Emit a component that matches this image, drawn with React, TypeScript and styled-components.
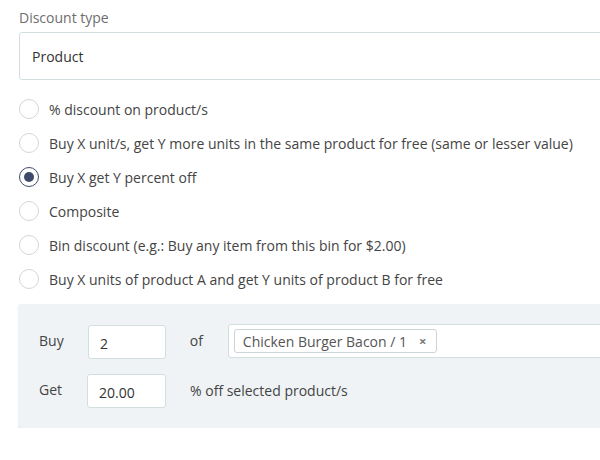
import React from "react";
import styled, { createGlobalStyle } from "styled-components";

const Global = createGlobalStyle`
  html, body { margin: 0; padding: 0; background: #fff; overflow: hidden; }
  body { font-family: "Open Sans", "Noto Sans", Arial, sans-serif; color: #444; }
  * { box-sizing: border-box; }
`;

const Page = styled.div`
  width: 660px;
  padding: 8px 0 0 19px;
`;

const Label = styled.div`
  font-size: 14px;
  color: #6e6e6e;
  line-height: 19px;
  margin-bottom: 5px;
`;

const Select = styled.div`
  height: 48px;
  border: 1px solid #d2dfe0;
  border-radius: 3px;
  padding: 0 12px;
  display: flex;
  align-items: center;
  font-size: 14px;
  color: #333;
`;

const RadioList = styled.div`
  display: flex;
  flex-direction: column;
  margin-top: 19px;
  gap: 14px;
`;

const RadioRow = styled.label`
  display: flex;
  align-items: center;
  gap: 10px;
  height: 20px;
  font-size: 14px;
  color: #444;
`;

const Circle = styled.span<{ $checked?: boolean }>`
  width: 20px;
  height: 20px;
  border-radius: 50%;
  border: 1px solid ${(p) => (p.$checked ? "#3f4d6b" : "#d6d6d6")};
  background: #fff;
  display: flex;
  align-items: center;
  justify-content: center;
  flex: none;
  &::after {
    content: "";
    display: ${(p) => (p.$checked ? "block" : "none")};
    width: 10px;
    height: 10px;
    border-radius: 50%;
    background: #3d4a6b;
  }
`;

const Panel = styled.div`
  margin-top: 15px;
  margin-left: -1px;
  background: #eff3f6;
  border-radius: 3px;
  box-shadow: 0 1px 1px rgba(0, 0, 0, 0.15);
  padding: 21px 21px 20px 21px;
  display: flex;
  flex-direction: column;
  gap: 15px;
`;

const FieldRow = styled.div`
  display: flex;
  align-items: center;
  font-size: 14px;
  color: #444;
`;

const RowLabel = styled.span`
  width: 49px;
  flex: none;
  margin-top: -3px;
`;

const SmallInput = styled.div<{ $shift?: number }>`
  width: 79px;
  height: 34px;
  background: #fff;
  border: 1px solid #d2dfe0;
  border-radius: 3px;
  display: flex;
  align-items: center;
  padding: 2px 11px 0;
  color: #333;
  margin-right: 24px;
  margin-left: ${(p) => p.$shift ?? 0}px;
`;

const Of = styled.span`
  width: 38px;
  flex: none;
  margin-top: -4px;
`;

const Aside = styled.span`
  margin-top: -2px;
`;

const TagInput = styled.div`
  width: 420px;
  height: 34px;
  background: #fff;
  border: 1px solid #d2dfe0;
  border-radius: 3px;
  display: flex;
  align-items: center;
  padding: 0 5px;
  margin-top: -2px;
`;

const Chip = styled.span`
  height: 24px;
  border: 1px solid #ccd4d8;
  border-radius: 3px;
  display: flex;
  align-items: center;
  padding: 0 10px 0 8px;
  gap: 12px;
  color: #555;
  font-size: 14px;
`;

const X = styled.span`
  font-size: 13px;
  color: #777;
  font-weight: 700;
`;

const options = [
  "% discount on product/s",
  "Buy X unit/s, get Y more units in the same product for free (same or lesser value)",
  "Buy X get Y percent off",
  "Composite",
  "Bin discount (e.g.: Buy any item from this bin for $2.00)",
  "Buy X units of product A and get Y units of product B for free",
];

export default function App() {
  return (
    <>
      <Global />
      <Page>
        <Label>Discount type</Label>
        <Select>Product</Select>
        <RadioList>
          {options.map((o, i) => (
            <RadioRow key={o}>
              <Circle $checked={i === 2} />
              {o}
            </RadioRow>
          ))}
        </RadioList>
        <Panel>
          <FieldRow>
            <RowLabel>Buy</RowLabel>
            <SmallInput>2</SmallInput>
            <Of>of</Of>
            <TagInput>
              <Chip>
                Chicken Burger Bacon / 1 <X>×</X>
              </Chip>
            </TagInput>
          </FieldRow>
          <FieldRow>
            <RowLabel>Get</RowLabel>
            <SmallInput $shift={-1}>20.00</SmallInput>
            <Aside>% off selected product/s</Aside>
          </FieldRow>
        </Panel>
      </Page>
    </>
  );
}
